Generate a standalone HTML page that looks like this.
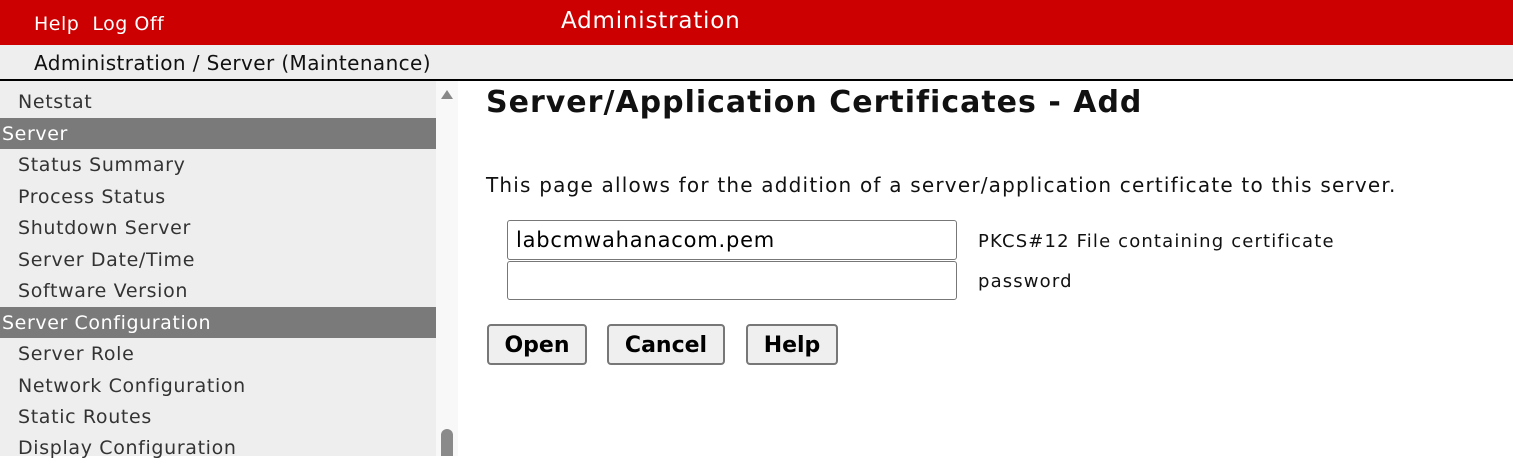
<!DOCTYPE html><html><head><style>
body{margin:0;width:1513px;height:456px;overflow:hidden;font-family:"DejaVu Sans",Verdana,sans-serif;background:#fff;position:relative}
div{position:absolute;box-sizing:border-box}
.hd{left:0;top:0;width:1513px;height:45px;background:#cc0000;color:#fff}
.bc{left:0;top:45px;width:1513px;height:36px;background:#eeeeee;border-bottom:2px solid #000;font-size:20px;letter-spacing:0.4px;padding:6px 0 0 34px;color:#111}
.sb{left:0;top:81px;width:436px;height:375px;background:#eeeeee}
.sc{left:436px;top:81px;width:22px;height:375px;background:#f8f8f8;overflow:hidden}
.it{left:18px;font-size:19px;letter-spacing:0.65px;color:#333;line-height:31px}
.sec{left:0;width:436px;height:31px;background:#7a7a7a;color:#fff;font-size:19px;letter-spacing:0.6px;line-height:31px;padding-left:2px;padding-top:1px}
.in{left:507px;width:450px;border:1px solid #777;border-radius:3px;font-size:21px;letter-spacing:0.8px;padding:7px 8px}
.lb{left:978px;font-size:18px;letter-spacing:1.15px;color:#111}
.bt{top:324px;height:41px;border:2px solid #777;border-radius:4px;background:#efefef;font-weight:bold;font-size:22px;text-align:center;line-height:40px}
</style></head><body>
<div class="hd"><div style="left:34px;top:13px;font-size:19px;letter-spacing:0.5px">Help&nbsp;&nbsp;Log Off</div><div style="left:561px;top:8px;font-size:23px;letter-spacing:0.8px">Administration</div></div>
<div class="bc">Administration / Server (Maintenance)</div>
<div class="sb"></div>
<div class="it" style="top:87px">Netstat</div>
<div class="sec" style="top:118px">Server</div>
<div class="it" style="top:150px">Status Summary</div>
<div class="it" style="top:182px">Process Status</div>
<div class="it" style="top:213px">Shutdown Server</div>
<div class="it" style="top:245px">Server Date/Time</div>
<div class="it" style="top:276px">Software Version</div>
<div class="sec" style="top:307px">Server Configuration</div>
<div class="it" style="top:339px">Server Role</div>
<div class="it" style="top:371px">Network Configuration</div>
<div class="it" style="top:402px">Static Routes</div>
<div class="it" style="top:433px">Display Configuration</div>
<div class="sc"><svg style="position:absolute;left:4px;top:8px" width="14" height="12"><path d="M7 1L13 10H1Z" fill="#888"/></svg><div style="left:5px;top:348px;width:12px;height:40px;background:#8a8a8a;border-radius:6px"></div></div>
<div style="left:486px;top:85px;font-size:30px;letter-spacing:1px;font-weight:bold;color:#111">Server/Application Certificates - Add</div>
<div style="left:486px;top:173px;font-size:20px;letter-spacing:1.2px;color:#111">This page allows for the addition of a server/application certificate to this server.</div>
<div class="in" style="top:220px;height:40px">labcmwahanacom.pem</div>
<div class="in" style="top:261px;height:39px"></div>
<div class="lb" style="top:231px">PKCS#12 File containing certificate</div>
<div class="lb" style="top:271px">password</div>
<div class="bt" style="left:487px;width:100px">Open</div>
<div class="bt" style="left:607px;width:118px">Cancel</div>
<div class="bt" style="left:746px;width:92px">Help</div>
</body></html>
